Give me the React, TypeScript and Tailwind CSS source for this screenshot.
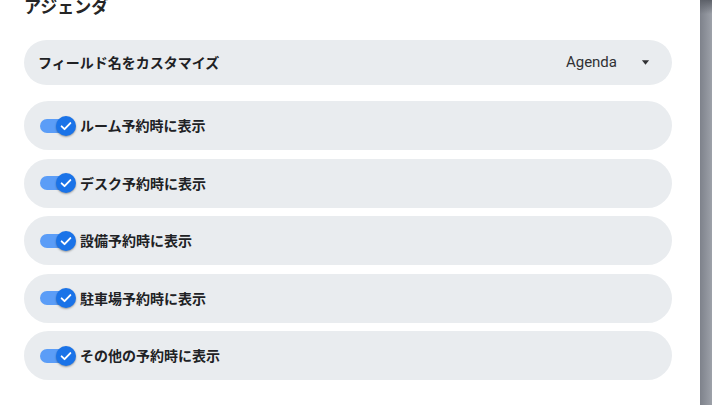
import React from "react";

const rows = [
  "ルーム予約時に表示",
  "デスク予約時に表示",
  "設備予約時に表示",
  "駐車場予約時に表示",
  "その他の予約時に表示",
];

const jp = { fontFamily: '"Noto Sans CJK JP", "Noto Sans", sans-serif' };

function Toggle() {
  return (
    <div className="relative w-[36px] h-[20px] shrink-0">
      <div className="absolute left-0 top-[3px] w-[28px] h-[14px] rounded-full bg-[#5b9df7]" />
      <div className="absolute left-[16px] top-0 w-[20px] h-[20px] rounded-full bg-[#1a73e8] shadow-[0_1px_2px_rgba(0,0,0,0.35)] flex items-center justify-center">
        <svg width="14" height="14" viewBox="0 0 24 24" fill="none">
          <path d="M4.5 12.5l5 5L19.5 7" stroke="white" strokeWidth="3.2" strokeLinecap="round" strokeLinejoin="round" />
        </svg>
      </div>
    </div>
  );
}

export default function App() {
  return (
    <div className="w-[712px] h-[405px] bg-white overflow-hidden flex" style={jp}>
      <div className="w-[700px] pl-6 pr-[28px]">
        <h2 className="text-[17px] font-bold leading-[18px] mt-[-3px] text-[#262626]">アジェンダ</h2>
        <div className="mt-[25px] h-[45px] rounded-full bg-[#e9ecef] pl-[14px] pr-[22px] flex items-center justify-between">
          <span className="text-[14px] font-bold text-[#202124]">フィールド名をカスタマイズ</span>
          <div className="flex items-center">
            <span className="text-[15px] text-[#303134]" style={{ fontFamily: 'Roboto, "Liberation Sans", sans-serif' }}>
              Agenda
            </span>
            <svg className="ml-[24px]" width="9" height="5" viewBox="0 0 10 5">
              <path d="M1 0h8L5 5z" fill="#303134" />
            </svg>
          </div>
        </div>
        <div className="mt-[16px] flex flex-col gap-[8.5px]">
          {rows.map((r) => (
            <div key={r} className="h-[49px] rounded-full bg-[#e9ecef] pl-[16px] flex items-center gap-[4px]">
              <Toggle />
              <span className="text-[14px] font-bold text-[#202124]">{r}</span>
            </div>
          ))}
        </div>
      </div>
      <div className="relative w-[12px] h-full bg-gradient-to-r from-[#7e828b] to-[#9da1a9]">
        <div className="absolute inset-x-0 top-0 h-[14px] bg-gradient-to-b from-[#5d6169] to-transparent" />
      </div>
    </div>
  );
}
